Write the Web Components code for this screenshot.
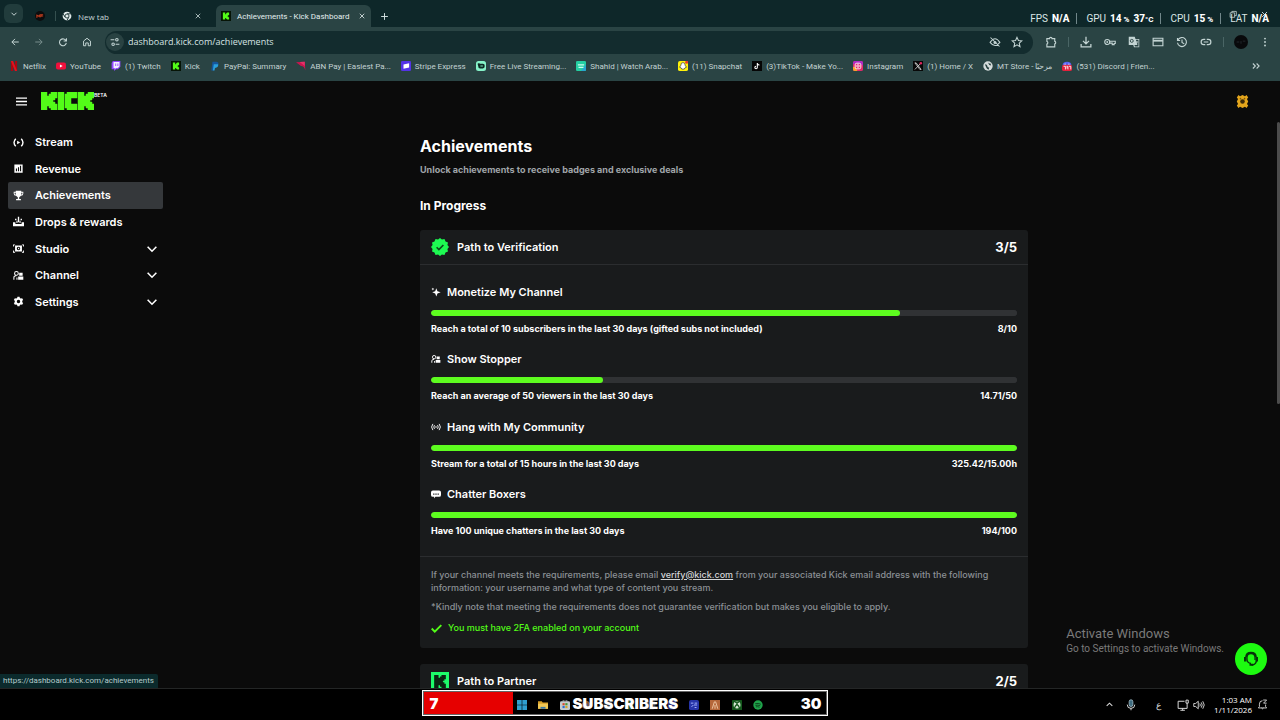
<!DOCTYPE html>
<html lang="en">
<head>
<meta charset="utf-8">
<title>Achievements - Kick Dashboard</title>
<style>
html,body{margin:0;height:100%;background:#000}
body{font-family:"Inter",sans-serif;color:#fff;overflow:hidden}
</style>
</head>
<body>
<kick-desktop></kick-desktop>
<script>
const K = 'M0 0h3v2h1V1h1V0h3v3H7v1H6v1h1v1h1v3H5V8H4V7H3v2H0z';
const line = (d, w = 1.6) => `<path d="${d}" fill="none" stroke="currentColor" stroke-width="${w}"/>`;
const fill = (d, c = 'currentColor') => `<path d="${d}" fill="${c}" fill-rule="evenodd"/>`;
const ICONS = {
  down: line('M3 5.500l5 5 5-5', 1.8),
  up: line('M3 10.500l5-5 5 5', 1.8),
  close: line('M3.500 3.500l9 9M12.500 3.500l-9 9', 1.6),
  plus: line('M8 2v12M2 8h12', 1.7),
  minus: line('M3 8h10', 1.4),
  restore: line('M2 5h8v8H2zM5 5V2.500h8V10h-3', 1.3),
  back: line('M14 8H3M8 3L3 8l5 5', 1.6),
  forward: line('M2 8h11M8 3l5 5-5 5', 1.6),
  reload: line('M13 6.500A5.500 5.500 0 1 0 13.300 9.500M13.500 2v4.500H9', 1.7),
  home: line('M2.500 14V6.500L8 2l5.500 4.500V14H10V9.500H6V14z', 1.6),
  tune: line('M1 4.500h6M9 4.500a2 2 0 1 0 4 0 2 2 0 1 0-4 0M15 11.500H9M3 11.500a2 2 0 1 0 4 0 2 2 0 1 0-4 0', 1.7),
  eyeoff: line('M1.500 8.500Q8-1 14.500 8.500Q8 17 1.500 8.500zM2 2l12 12', 1.4) + '<circle cx="8" cy="8.500" r="2" fill="currentColor"/>',
  star: line('M8 1.800l1.900 4.300 4.600.4-3.500 3.100 1 4.600L8 11.800l-4 2.400 1-4.600L1.500 6.500l4.600-.4z', 1.4),
  puzzle: line('M2.500 3.500h3.500a1.700 1.700 0 0 1 3.400 0h3.600v3.700a1.700 1.700 0 0 1 0 3.300v4H2.500v-3.700a1.900 1.900 0 0 0 0-3.600z', 1.5),
  download: line('M8 1v9M4 6.500l4 4 4-4M1.500 10.500v4h13v-4', 1.7),
  key: line('M1 8a3.300 3.300 0 1 0 6.600 0 3.300 3.300 0 1 0-6.600 0M7.500 7H15v3h-1.500v1.500H11V9.500H7.300', 1.5) + '<circle cx="4.300" cy="8" r="1.200" fill="currentColor"/>',
  translate: fill('M1 1h8l1 3h5v11H8l-1-3H1zM8.500 12l.8 2H14V5h-3.500l2 7z') + '<circle cx="5" cy="6.500" r="2" fill="none" stroke="#2a4444" stroke-width="1.200"/>' + line('M10.500 8h3M12 7v1q0 3-2 4', 1),
  card: line('M1.500 3h13v10h-13z', 1.5) + fill('M1.500 5h13v2.500h-13z'),
  history: line('M2.500 5.500A6 6 0 1 1 2 9M2 2.500v3.500h3.500M8 4.500V8.500l3 2', 1.5),
  link: line('M7 4.500H5a3.500 3.500 0 0 0 0 7h2M9 4.500h2a3.500 3.500 0 0 1 0 7H9M5 8h6', 1.6),
  dots: '<g fill="currentColor"><circle cx="8" cy="2.500" r="1.500"/><circle cx="8" cy="8" r="1.500"/><circle cx="8" cy="13.500" r="1.500"/></g>',
  more: line('M3 4l4 4-4 4M9 4l4 4-4 4', 1.7),
  avatar: '<circle cx="8" cy="8" r="8" fill="#08090b"/><path d="M3 8h3M8 7v3M10 7h3" stroke="#262a30"/>',
  mt: '<circle cx="8" cy="8" r="8" fill="#0c0d0e"/><path d="M3 11V6l2 3 2-3v4M8 6h5M10 6l-1 4M8 8h5" fill="none" stroke="#c8401f" stroke-width="1.500"/>',
  chrome: '<circle cx="8" cy="8" r="7" fill="#dfe9e9"/><path d="M8 4.500h6.500M5 10L1.500 4M11 9.500L8 15" stroke="#17302f" stroke-width="1.500"/><circle cx="8" cy="8" r="3.200" fill="#dfe9e9" stroke="#17302f" stroke-width="1.400"/>',
  kick: `<rect width="16" height="16" fill="#061406"/><g transform="translate(3 2.500) scale(1.250)">${fill(K, '#53fc18')}</g>`,
  netflix: '<path d="M3 0h3.500v16H3zM9.500 0H13v16H9.500z" fill="#a80812"/><path d="M3 0h3.500L13 16H9.500z" fill="#e3111d"/>',
  youtube: '<rect y="2.500" width="16" height="11" rx="3" fill="#f1103c"/><path d="M6.300 5.500v5l4.400-2.500z" fill="#fff"/>',
  twitch: '<path d="M3 0h12v9l-4 4H8l-3 3v-3H1V3z" fill="#9147ff"/><path d="M4 1.500h9.500v7L11 11H8l-2 2v-2H4z" fill="#f4f0ff"/><path d="M7.500 4v4M11 4v4" stroke="#9147ff" stroke-width="1.400"/>',
  paypal: '<path d="M4 1h6q4 0 3.500 4T8 9.500H6.500L5.500 15H2z" fill="#16569c"/><path d="M6 5h7q1 5-5 6l-.8 4H4.500z" fill="#2aa0dd"/>',
  abn: '<path d="M0 2l14-1 1 14q-2-7-7-7z" fill="#c9154f"/><path d="M6 1.500l8-.5v7z" fill="#e63168"/>',
  stripe: '<rect width="16" height="16" rx="2" fill="#5433e8"/><path d="M4 5.500l9-2v7l-9 2z" fill="#fff"/>',
  free: '<rect width="16" height="16" rx="4" fill="#86f3c9"/><path d="M2.500 4.500L5 3l1 1.500h5q3 0 3 3.500t-3 4H6.500q-3 0-3-4z" fill="#0d2b25"/><path d="M7 8h4" stroke="#86f3c9" stroke-width="1.500"/>',
  shahid: '<rect width="16" height="16" rx="2" fill="#24cfa2"/><path d="M8 16h6a2 2 0 0 0 2-2V5z" fill="#27a7cf"/><path d="M3 6h10M4 10h8" stroke="#c9fff0" stroke-width="2"/>',
  snap: '<rect width="16" height="16" rx="3" fill="#fff20a"/><path d="M8 2.500q3.500 0 3.500 4.500l2 3-2.500 1-1 2H6l-1-2-2.500-1 2-3Q4.500 2.500 8 2.500z" fill="#fff" stroke="#222" stroke-width="1"/><circle cx="14" cy="2" r="2.500" fill="#ef3b24"/>',
  tiktok: '<rect width="16" height="16" fill="#050505"/><path d="M8.500 3v7.500a2 2 0 1 1-2-2M8.500 4q1 2.500 3.500 2.500" fill="none" stroke="#fff" stroke-width="1.700"/>',
  instagram: '<rect width="16" height="16" rx="3" fill="#e22a6d"/><path d="M0 9q5 0 7 7H3a3 3 0 0 1-3-3z" fill="#f9a32b"/><path d="M3 0h10a3 3 0 0 1 3 3v4Q9 2 0 5V3a3 3 0 0 1 3-3z" fill="#b02bc4"/><rect x="3.500" y="3.500" width="9" height="9" rx="2.500" fill="none" stroke="#fff" stroke-width="1.400"/><circle cx="8" cy="8" r="2" fill="none" stroke="#fff" stroke-width="1.400"/>',
  x: '<rect width="16" height="16" fill="#080808"/><path d="M3 3l8 10.500h2L5 3zM13 3L3 13.500" fill="none" stroke="#e8e8e8" stroke-width="1.200"/><circle cx="12.500" cy="3.500" r="2" fill="#e0245e"/>',
  globe: '<circle cx="8" cy="8" r="7.500" fill="#d5dcdc"/><path d="M3 5q4 0 4 3t3 2l-1 4q-3-1-4-4zM8 2.500q2 2 4 1.500l1 3-3-.5z" fill="#27413f"/>',
  discord: '<path d="M1 7q0-6 7-6t7 6z" fill="#5865f2"/><rect y="6" width="16" height="10" rx="3" fill="#e4213c"/><path d="M2.500 8.500h3v5M7 11h2.500M7 8.500h2.500v5M11 8.500h3v5M4 5h2M10 5h2" fill="none" stroke="#fff" stroke-width="1.300"/>',
  menu: line('M0 3h16M0 8h16M0 13h16', 1.9),
  stream: line('M4 2.500Q-1 8 4 13.500M12 2.500Q17 8 12 13.500', 2) + fill('M6 5.300v5.400L10.500 8z'),
  revenue: fill('M2 2h12v12H2zM4.200 8v4h1.600V8zM7.200 6v6h1.600V6zM10.200 4v8h1.600V4z'),
  trophy: fill('M4 1h8v1.500h3V5q0 3-3.500 3.500Q10.500 10 9 10.500V13h2.500v2h-7v-2H7v-2.500Q5.500 10 4.500 8.500 1 8 1 5V2.500h3zM2.300 4v1q0 1.500 1.700 2V4zM13.700 4H12v3q1.700-.5 1.700-2z'),
  drops: fill('M7 1h2v8H7zM3 4h2v2H3zM11 4h2v2h-2zM0 9h3.500v2.500h9V9H16v6H0z') + fill('M5 7h1.500v3H5zM9.500 7H11v3H9.500z'),
  studio: fill('M3 3.500h10v9H3zM8 5.500a2.500 2.500 0 1 0 0 5 2.500 2.500 0 0 0 0-5zM7.300 6.700v2.600L9.500 8z') + fill('M0 2h3v1.300H1.300V5H0zM13 2h3v3h-1.300V3.300H13zM0 11h1.300v1.700H3V14H0zM14.700 11H16v3h-3v-1.300h1.700z'),
  people: line('M2.300 5a2.700 2.700 0 1 0 5.400 0 2.700 2.700 0 1 0-5.400 0M1.300 14V11q0-2.500 3.500-2.500', 1.5) + fill('M9 4h5v4.500H9zM7.500 9.500H15V14H7.500zM5 11h1.500v3H5z'),
  gear: fill('M6.500 1h3l.5 2 1.300.7 2-.6 1.500 2.600L13.400 7v2l1.400 1.300-1.500 2.600-2-.6L10 13l-.5 2h-3L6 13l-1.300-.7-2 .6-1.500-2.600L2.600 9V7L1.200 5.700l1.500-2.600 2 .6L6 3zM8 5.500a2.500 2.500 0 1 0 0 5 2.500 2.500 0 0 0 0-5z'),
  sparkle: fill('M8.500 2l1.800 4.700L15.500 8.500l-5.200 1.800L8.500 15 6.700 10.300 2 8.500l4.700-1.800zM3 1l.7 1.500L5.200 3.200 3.700 4 3 5.500 2.300 4 .8 3.200 2.300 2.500z'),
  signal: line('M3 3q-4 5 0 10M13 3q4 5 0 10M5.500 5q-2 3 0 6M10.500 5q2 3 0 6', 1.5) + '<circle cx="8" cy="8" r="1.300" fill="currentColor"/>',
  chat: fill('M3 2.500h10q3 0 3 3v4q0 3-3 3H7L5 15v-2.500H3q-3 0-3-3v-4q0-3 3-3zM3.500 7v2h2V7zM7 7v2h2V7zM10.500 7v2h2V7z'),
  check: line('M1 8l4.500 4.500L15 3', 2.800),
  verified: '<path d="M8 0l1.700 1.400L12 .9l.9 2.200 2.200.9-.5 2.300L16 8l-1.400 1.700.5 2.300-2.200.9-.9 2.200-2.300-.5L8 16l-1.700-1.400-2.300.5-.9-2.200L.9 12l.5-2.300L0 8l1.400-1.700L.9 4l2.200-.9L4 .9l2.300.5z" fill="#1dfa52"/><path d="M5 8.200l2 2 4-4" fill="none" stroke="#0d4a1c" stroke-width="1.500"/>',
  partner: `<rect width="16" height="16" fill="#1dfa6a"/><g transform="translate(2.800 2.600) scale(1.300)">${fill(K, '#0a2412')}</g>`,
  badge: '<path d="M3 0l2 1.500L8 0l3 1.500L13 0l2 3-1.500 2L15 8l-1.500 3 1.500 2-2 3-2-1.500L8 16l-3-1.500L3 16l-2-3 1.500-2L1 8l1.500-3L1 3z" fill="#e3a51c"/><circle cx="8" cy="8" r="2.800" fill="#3b2a08"/><circle cx="5.500" cy="4.500" r="1" fill="#7a570c"/><circle cx="10.500" cy="4.500" r="1" fill="#7a570c"/>',
  headset: line('M4 8V6.500a4 4 0 0 1 8 0V9M2 6v4M14 6v4M2.800 6Q3 1.500 8 1.500T13.200 6M4 8q0 4 4 4.500M13.500 10q-1 4-5 4', 1.300) + fill('M1 6h2.500v4.500H1zM12.500 6H15v4.500h-2.500zM6.500 12.800h3.500v2H6.500z'),
  windows: '<path d="M0 0h7.500v7.500H0zM8.500 0H16v7.500H8.500zM0 8.500h7.500V16H0zM8.500 8.500H16V16H8.500z" fill="#2f9fd0"/>',
  folder: '<path d="M0 2h6l1.500 2H16v10H0z" fill="#d79f26"/><path d="M0 6h16v8H0z" fill="#f0c755"/><path d="M4 11h8v3H4z" fill="#3a78a8"/>',
  store: '<rect y="2" width="16" height="14" rx="2" fill="#c5ccd0"/><path d="M5 3V0h6v3" fill="none" stroke="#c5ccd0"/><path d="M4 5h3.500v3.500H4z" fill="#d8492a"/><path d="M8.500 5H12v3.500H8.500z" fill="#4a9b33"/><path d="M4 9.500h3.500V13H4z" fill="#2a6fd0"/><path d="M8.500 9.500H12V13H8.500z" fill="#d6a52a"/>',
  app1: '<circle cx="8" cy="8" r="7" fill="#8a5630"/><circle cx="8" cy="8" r="3" fill="#2d5fa0"/>',
  app2: '<rect x="1" y="1" width="14" height="14" rx="4" fill="#313a44"/>',
  app3: '<rect x="1" y="1" width="14" height="14" rx="4" fill="#2b5b33"/>',
  app4: '<rect x="1" y="1" width="14" height="14" rx="4" fill="#30307c"/>',
  blue: '<rect width="16" height="16" rx="3" fill="#2634a8"/><path d="M3 5h4M4 11l3-3M9 5h4M8 8h5M9 12h3" stroke="#a9b6ff" stroke-width="1.500"/>',
  orange: '<rect width="16" height="16" fill="#b5673a"/><path d="M3.500 14L7 3h2l3.500 11M8 8v6" fill="none" stroke="#efc9a6" stroke-width="1.500"/>',
  xbox: '<rect width="16" height="16" rx="1" fill="#14571c"/><circle cx="8" cy="8" r="5.500" fill="#d4e8d2"/><path d="M4 13q1-4 4-6 3 2 4 6M5 3.500q2 .5 3 2 1-1.500 3-2" fill="none" stroke="#14571c" stroke-width="2"/>',
  spotify: '<circle cx="8" cy="8" r="7.500" fill="#1fa34a"/><path d="M3.500 6q5-1.500 9 .8M4 8.700q4-1.200 7.500.6M4.500 11q3-.8 6 .5" fill="none" stroke="#0b3317" stroke-width="1.300"/>',
  mic: '<rect x="5.500" y="1" width="5" height="9" rx="2.500" fill="#3e6c80" stroke="#a9c6d2"/>' + line('M3 7.500q0 5 5 5t5-5M8 12.500V15', 1.3),
  monitor: line('M10 3H1.500v9.500h12V8M4.500 15h6M7.500 12.500V15M12 1.500h3v4h-3zM13.500 5.500V8', 1.3),
  speaker: line('M1 6h2.500L7 3v10L3.500 10H1zM9 6q1.500 2 0 4M11 4.500q2.500 3.500 0 7M13 3q4 5 0 10', 1.2),
  bell: line('M8 2.500q-4.500 0-4.500 5V11L2 13h12l-1.500-2V8M6.500 13q1.500 2.500 3 0M9 1.500h5L9.500 6H14', 1.3)
};

/* Shared base: one open shadow root per element, filled from render(). */
class Part extends HTMLElement {
  connectedCallback() {
    if (this.shadowRoot) return;
    const t = document.createElement('template');
    t.innerHTML = `<style>:host{display:block;box-sizing:border-box}*{box-sizing:border-box}
      button{all:unset;box-sizing:border-box;display:grid;place-items:center;cursor:pointer}
      a{color:inherit;text-decoration:none}${this.css()}</style>${this.render()}`;
    this.attachShadow({ mode: 'open' }).append(t.content.cloneNode(true));
  }
  css() { return ''; }
  render() { return '<slot></slot>'; }
}
const define = (name, css, render) => customElements.define(name, class extends Part {
  css() { return css; }
  render() { return render(this); }
});
const icon = (n, s = 10) => `<k-icon name="${n}" size="${s}"></k-icon>`;
const iconButton = (n, label, s) => `<button aria-label="${label}">${icon(n, s)}</button>`;

define('k-icon', ':host{display:inline-grid;flex:none}svg{display:block}', el => {
  const s = el.getAttribute('size');
  return `<svg width="${s}" height="${s}" viewBox="0 0 16 16" aria-hidden="true">${ICONS[el.getAttribute('name')]}</svg>`;
});

define('browser-tab', `
  :host{display:flex;align-items:center;gap:6px;height:22px;padding:0 6px;font-size:8px;color:#c6d6d6}
  :host([active]){background:#2a4444;border-radius:6px 6px 0 0;color:#e3eeee}
  span{flex:1;white-space:nowrap}
  button{width:8px;height:12px}`,
  el => `${icon(el.getAttribute('icon'))}<span><slot></slot></span>${iconButton('close', 'Close tab', 8)}`);

define('tab-strip', `
  :host{display:flex;align-items:end;height:27px;background:#0e2729;position:relative;color:#d5e2e2;flex:none}
  .search{width:19px;height:19px;border-radius:6px;background:#213c3c;margin:0 11px 4px 4px}
  .pin{width:12px;height:22px;display:grid;place-items:center}
  i{width:1px;height:10px;background:#35504f;margin:0 0 6px 9px}
  .idle{width:152px}
  .active{width:155px;margin-left:8px;padding:0 5px;font-family:"Roboto",sans-serif}
  .add{width:16px;height:22px;margin-left:5px}
  .win{display:flex;gap:18px;margin-left:auto;padding:0 9px 6px 0}
  .win button{width:13px;height:14px}`,
  () => `<button class="search" aria-label="Search tabs">${icon('down', 8)}</button>
  <span class="pin">${icon('mt')}</span><i></i>
  <browser-tab class="idle" icon="chrome">New tab</browser-tab>
  <browser-tab class="active" active icon="kick">Achievements - Kick Dashboard</browser-tab>
  ${iconButton('plus', 'New tab', 9).replace('<button', '<button class="add"')}
  <div class="win">${iconButton('minus', 'Minimize', 9)}${iconButton('restore', 'Restore', 9)}${iconButton('close', 'Close', 9)}</div>`);

define('perf-stats', `
  :host{position:absolute;top:11px;right:11px;display:flex;align-items:center;height:14px;font:10px "Roboto",sans-serif;color:#dbe6e6}
  span{padding:0 7px 0 9px;border-left:1px solid #71878a;white-space:nowrap}
  span:first-of-type{border:0}span:last-of-type{padding-right:0}
  b{font-weight:800;color:#fff;margin-left:4px}small{font-size:8px}`,
  () => `<span>FPS<b>N/A</b></span><span>GPU<b>14<small> %</small></b><b>37<small>°C</small></b></span><span>CPU<b>15<small> %</small></b></span><span>LAT<b>N/A</b></span>`);

define('tool-bar', `
  :host{display:flex;align-items:center;height:30px;padding:0 3px;background:#2a4444;color:#c3d4d3;flex:none}
  button{width:24px;height:24px}
  button[aria-label=Forward]{opacity:.5}
  form{flex:1;display:flex;align-items:center;height:23px;margin:0 6px;padding:0 5px 0 1px;border-radius:12px;background:#132c2e}
  .site{width:18px;height:18px;border-radius:9px;background:#294242;margin:0 4px 0 0}
  input{all:unset;flex:1;min-width:0;font-size:9px;line-height:20px;color:#d6e3e3}
  form button{width:22px}
  i{width:1px;height:10px;background:#4a6565;margin:0 5px}`,
  () => `${iconButton('back', 'Back')}${iconButton('forward', 'Forward')}${iconButton('reload', 'Reload')}${iconButton('home', 'Home')}
  <form><button type="button" class="site" aria-label="Site information">${icon('tune')}</button>
  <input aria-label="Address" value="dashboard.kick.com/achievements">
  ${iconButton('eyeoff', 'Third-party cookies blocked', 12)}${iconButton('star', 'Bookmark this tab', 12)}</form>
  ${iconButton('puzzle', 'Extensions', 12)}<i></i>${iconButton('download', 'Downloads', 12)}${iconButton('key', 'Passwords', 12)}${iconButton('translate', 'Translate', 12)}${iconButton('card', 'Payments', 12)}${iconButton('history', 'History', 12)}${iconButton('link', 'Copy link', 12)}<i></i>${iconButton('avatar', 'Profile', 14)}${iconButton('dots', 'Menu', 10)}`);

const MARKS = [['netflix','Netflix'],['youtube','YouTube'],['twitch','(1) Twitch'],['kick','Kick'],['paypal','PayPal: Summary'],['abn','ABN Pay | Easiest Pa...'],['stripe','Stripe Express'],['free','Free Live Streaming...'],['shahid','Shahid | Watch Arab...'],['snap','(11) Snapchat'],['tiktok','(3)TikTok - Make Yo...'],['instagram','Instagram'],['x','(1) Home / X'],['globe','MT Store - مرحبًا'],['discord','(531) Discord | Frien...']];
define('bookmark-bar', `
  :host{display:flex;align-items:center;height:24px;padding:0 19px 6px 9px;background:#2a4444;color:#c3d2d2;font-size:8px;flex:none}
  nav{display:flex;gap:10px;flex:1}
  a{display:flex;align-items:center;gap:4px;white-space:nowrap}
  button{width:10px;height:14px}`,
  () => `<nav aria-label="Bookmarks">${MARKS.map(([i, t]) => `<a href="#">${icon(i)}<span>${t}</span></a>`).join('')}</nav>${iconButton('more', 'More bookmarks')}`);

define('kick-header', `
  :host{display:flex;align-items:center;height:40px;padding:0 31px 0 16px;flex:none}
  .logo{display:flex;align-items:start;margin-left:14px}
  sup{font-size:5px;line-height:6px;font-weight:600}
  .badge{margin-left:auto;width:14px;height:20px}`,
  () => `${iconButton('menu', 'Toggle menu', 11)}
  <a class="logo" href="#" aria-label="Kick"><svg width="53" height="18" viewBox="0 0 26.500 9" fill="#53fc18" stroke="#53fc18" stroke-width=".25"><path d="${K}"/><path d="M8.500 0h3v9h-3z"/><path d="M13 0h5v3h-3v3h3v3h-5V8h-1V1h1z"/><path d="${K}" transform="translate(18.500)"/></svg><sup>BETA</sup></a>
  ${iconButton('badge', 'Account', 13).replace('<button', '<button class="badge"')}`);

define('nav-item', `
  :host{display:grid}
  a{display:flex;align-items:center;padding:0 4px 0 5px;border-radius:2px;font-size:11px;font-weight:600}
  :host([current]) a{background:#35383b}
  span{flex:1;margin-left:11px}`,
  el => `<a href="#"${el.hasAttribute('current') ? ' aria-current="page"' : ''}>${icon(el.getAttribute('icon'), 11)}<span><slot></slot></span>${el.hasAttribute('group') ? icon('down', 14) : ''}</a>`);

define('side-nav', `
  :host{flex:none;width:171px;padding:8px 8px 0}
  nav{display:grid;grid-auto-rows:1fr;height:186px}`,
  () => `<nav aria-label="Dashboard"><nav-item icon="stream">Stream</nav-item><nav-item icon="revenue">Revenue</nav-item><nav-item icon="trophy" current>Achievements</nav-item><nav-item icon="drops">Drops &amp; rewards</nav-item><nav-item icon="studio" group>Studio</nav-item><nav-item icon="people" group>Channel</nav-item><nav-item icon="gear" group>Settings</nav-item></nav>`);

define('goal-row', `
  :host{display:grid}
  h4{display:flex;align-items:center;gap:6px;margin:0 0 11px;font-size:11px;line-height:14px;font-weight:600}
  progress{appearance:none;display:block;width:100%;height:6px;border:0;border-radius:3px;overflow:hidden;background:#303234}
  progress::-webkit-progress-bar{background:#303234;border-radius:3px}
  progress::-webkit-progress-value{background:#5dfc1f;border-radius:3px}
  p{display:flex;justify-content:space-between;margin:6px 0 0;font-size:9px;line-height:14px;font-weight:700}`,
  el => `<h4>${icon(el.getAttribute('icon'))}<slot name="title"></slot></h4>
  <progress aria-label="Progress" max="${el.getAttribute('max')}" value="${el.getAttribute('value')}"></progress>
  <p><slot></slot><span>${el.getAttribute('count')}</span></p>`);

define('path-card', `
  :host{background:#191b1c;border-radius:3px}
  header{display:flex;align-items:center;height:35px;padding:0 11px;border-bottom:1px solid #2b2d2f}
  h3{flex:1;margin:0 0 0 8px;font-size:11px;font-weight:600}
  b{font-size:13px;font-weight:700}`,
  el => `<header>${icon(el.getAttribute('icon'), 18)}<h3>${el.getAttribute('heading')}</h3><b>${el.getAttribute('score')}</b></header><slot></slot>`);

define('achievement-page', `
  :host{width:608px;max-width:100%;margin:0 auto;padding-top:13px}
  h1{margin:0;font-size:16px;line-height:24px;font-weight:700}
  .sub{margin:5px 0 19px;font-size:9px;line-height:14px;font-weight:700;color:#a0a5a9}
  h2{margin:0 0 14px;font-size:12px;line-height:20px;font-weight:700}
  .goals{display:flex;flex-direction:column;justify-content:space-between;min-height:292px;padding:20px 11px 18px;border-bottom:1px solid #2b2d2f}
  .note{padding:11px 11px 13px;font-size:9px;line-height:13px;font-weight:500;color:#8b9095}
  .note p{margin:0 0 6px}.note a{color:#d4d6d8;text-decoration:underline}
  .note .ok{display:flex;align-items:center;gap:6px;margin:8px 0 0;line-height:14px;color:#53fc18}
  path-card{margin-bottom:16px}`,
  () => `<h1>Achievements</h1><p class="sub">Unlock achievements to receive badges and exclusive deals</p><h2>In Progress</h2>
  <path-card icon="verified" heading="Path to Verification" score="3/5">
    <div class="goals">
      <goal-row icon="sparkle" max="10" value="8" count="8/10"><span slot="title">Monetize My Channel</span>Reach a total of 10 subscribers in the last 30 days (gifted subs not included)</goal-row>
      <goal-row icon="people" max="50" value="14.71" count="14.71/50"><span slot="title">Show Stopper</span>Reach an average of 50 viewers in the last 30 days</goal-row>
      <goal-row icon="signal" max="15" value="15" count="325.42/15.00h"><span slot="title">Hang with My Community</span>Stream for a total of 15 hours in the last 30 days</goal-row>
      <goal-row icon="chat" max="100" value="100" count="194/100"><span slot="title">Chatter Boxers</span>Have 100 unique chatters in the last 30 days</goal-row>
    </div>
    <div class="note"><p>If your channel meets the requirements, please email <a href="mailto:verify@kick.com">verify@kick.com</a> from your associated Kick email address with the following information: your username and what type of content you stream.</p>
    <p>*Kindly note that meeting the requirements does not guarantee verification but makes you eligible to apply.</p>
    <p class="ok">${icon('check', 11)}You must have 2FA enabled on your account</p></div>
  </path-card>
  <path-card icon="partner" heading="Path to Partner" score="2/5"></path-card>`);

define('kick-app', `
  :host{display:flex;flex-direction:column;position:relative;flex:1;min-height:0;overflow:hidden;background:#0b0b0b;border-bottom:1px solid #242626}
  .body{display:flex;flex:1;min-height:0}
  main{flex:1;min-width:0;overflow:hidden}
  .bar{width:3px;flex:none}.bar i{display:block;height:282px;margin-top:1px;background:#4c4c4c;border-radius:2px}
  .link,.activate{font-family:"Roboto",sans-serif}
  .link{position:absolute;left:0;bottom:0;height:14px;padding:0 4px 0 3px;line-height:14px;background:#0b2a2c;color:#b5cccc;border-radius:0 2px 0 0;font-size:8px}
  .activate{position:absolute;right:56px;bottom:32px;color:#7a7a7a;font-size:10px;line-height:14px;white-space:nowrap}
  .activate strong{display:block;font-weight:400;font-size:13px;line-height:17px}
  .help{position:absolute;right:13px;bottom:13px;width:32px;height:32px;border-radius:16px;background:#1dfb10;color:#06330a}`,
  () => `<kick-header></kick-header><div class="body"><side-nav></side-nav><main><achievement-page></achievement-page></main><div class="bar"><i></i></div></div>
  <div class="link">https://dashboard.kick.com/achievements</div>
  <div class="activate"><strong>Activate Windows</strong>Go to Settings to activate Windows.</div>
  ${iconButton('headset', 'Help', 16).replace('<button', '<button class="help"')}`);

define('task-bar', `
  :host{display:grid;grid-template-columns:1fr 247px 1fr;align-items:center;height:31px;background:#000;color:#dcdcdc;flex:none}
  .apps{display:flex;justify-content:space-between;grid-column:2}
  .tray{display:flex;align-items:center;justify-content:end;padding-right:12px}
  .tray button{height:16px}
  .up{width:10px;margin-right:11px}.mic{width:12px;margin-right:19px}
  .lang{font-size:9px;margin-right:16px}.net{width:12px;margin-right:4px}.vol{width:12px;margin-right:9px}
  time{text-align:right;font-size:8px;line-height:10px;margin-right:5px;color:#fff;white-space:nowrap}`,
  () => `<div class="apps">${['windows','folder','store','app1','app2','app3','app2','app4','blue','orange','xbox','spotify'].map(n => icon(n)).join('')}</div>
  <div class="tray"><button class="up" aria-label="Show hidden icons">${icon('up', 9)}</button><button class="mic" aria-label="Microphone">${icon('mic', 12)}</button><span class="lang">ع</span><button class="net" aria-label="Network">${icon('monitor', 12)}</button><button class="vol" aria-label="Volume">${icon('speaker', 12)}</button><time>1:03 AM<br>1/11/2026</time><button aria-label="Notifications">${icon('bell', 11)}</button></div>`);

define('sub-goal', `
  :host{position:absolute;left:33%;bottom:4px;width:406px;height:26px;border:1px solid #fff;outline:1px solid #ffffff66;outline-offset:-2px;display:grid;grid-template-columns:90px 1fr;font:900 15px "Inter",sans-serif}
  .fill{background:#e60000;margin:1px 0 1px 1px}
  .text{position:absolute;inset:0;display:grid;grid-template-columns:1fr auto 1fr;align-items:center;padding:0 6px}
  .text span:last-child{text-align:right}`,
  () => `<div class="fill"></div><div class="text"><span>7</span><span>SUBSCRIBERS</span><span>30</span></div>`);

define('kick-desktop', `
  :host{display:flex;flex-direction:column;height:100vh;position:relative;overflow:hidden}
  tab-strip,tool-bar,task-bar{font-family:"Open Sans","Noto Sans",sans-serif}
  bookmark-bar{font-family:"Roboto","Noto Sans",sans-serif}`,
  () => `<tab-strip></tab-strip><tool-bar></tool-bar><bookmark-bar></bookmark-bar><kick-app></kick-app><task-bar></task-bar><perf-stats></perf-stats><sub-goal></sub-goal>`);
</script>
</body>
</html>
